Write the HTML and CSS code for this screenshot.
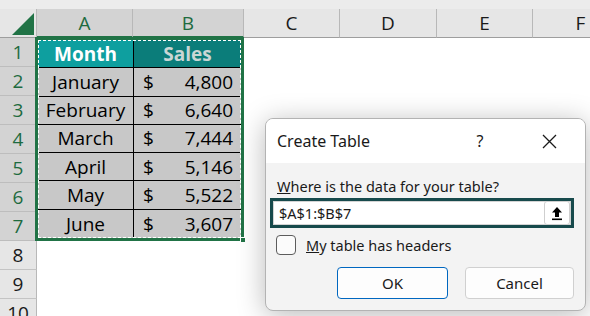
FILE: index.html
```html
<!DOCTYPE html>
<html lang="en">
<head>
  <meta charset="UTF-8" />
  <title>Create Table</title>
  <link rel="stylesheet" href="styles.css">
</head>
<body>

  <div class="topbar"></div>

  <div class="sheet">
    <div class="corner">
      <svg width="22" height="22" viewBox="0 0 22 22"><polygon points="22,0 22,22 0,22" fill="#217346"/></svg>
    </div>
    <div class="colhead sel">A</div>
    <div class="colhead sel">B</div>
    <div class="colhead">C</div>
    <div class="colhead">D</div>
    <div class="colhead">E</div>
    <div class="colhead">F</div>

    <div class="rowhead sel">1</div>
    <div class="rowhead sel">2</div>
    <div class="rowhead sel">3</div>
    <div class="rowhead sel">4</div>
    <div class="rowhead sel">5</div>
    <div class="rowhead sel">6</div>
    <div class="rowhead sel">7</div>
    <div class="rowhead">8</div>
    <div class="rowhead">9</div>
    <div class="rowhead">10</div>

    <div class="data">
      <div class="cell head month">Month</div>
      <div class="cell head sales">Sales</div>

      <div class="cell">January</div>
      <div class="cell amount"><span>$</span><span>4,800</span></div>
      <div class="cell">February</div>
      <div class="cell amount"><span>$</span><span>6,640</span></div>
      <div class="cell">March</div>
      <div class="cell amount"><span>$</span><span>7,444</span></div>
      <div class="cell">April</div>
      <div class="cell amount"><span>$</span><span>5,146</span></div>
      <div class="cell">May</div>
      <div class="cell amount"><span>$</span><span>5,522</span></div>
      <div class="cell">June</div>
      <div class="cell amount"><span>$</span><span>3,607</span></div>
      <div class="handle"></div>
    </div>
  </div>

  <div class="dialog">
    <div class="dialog-title">
      <span class="title-text">Create Table</span>
      <span class="help">?</span>
      <svg class="close" width="15" height="15" viewBox="0 0 15 15">
        <path d="M1 1 L14 14 M14 1 L1 14" stroke="#1a1a1a" stroke-width="1.3" fill="none"/>
      </svg>
    </div>
    <div class="dialog-body">
      <div class="label"><u>W</u>here is the data for your table?</div>
      <div class="range-input">
        <span class="range-text">$A$1:$B$7</span>
        <div class="collapse-btn">
          <svg width="12" height="15" viewBox="0 0 12 15">
            <path d="M6 1 L11 6.5 H8 V11 H4 V6.5 H1 Z" fill="#000"/>
            <rect x="1" y="12.5" width="10" height="1.6" fill="#000"/>
          </svg>
        </div>
      </div>
      <label class="check-row">
        <span class="checkbox"></span>
        <span><u>M</u>y table has headers</span>
      </label>
      <div class="buttons">
        <button class="btn primary">OK</button>
        <button class="btn">Cancel</button>
      </div>
    </div>
  </div>

</body>
</html>
```

FILE: styles.css
```css
* {
  box-sizing: border-box;
}

body {
  margin: 0;
  width: 590px;
  height: 316px;
  overflow: hidden;
  background-color: #ffffff;
  font-family: 'Open Sans', sans-serif;
  position: relative;
}

.topbar {
  height: 9px;
  background-color: #ececec;
}

.sheet {
  display: grid;
  grid-template-columns: 37px 96px 111px 96px 97px 96px 96px;
  grid-template-rows: repeat(11, 29px);
  width: 629px;
}

.corner {
  background-color: #e6e6e6;
  border-right: 1px solid #b8b8b8;
  border-bottom: 1px solid #9e9e9e;
  display: flex;
  align-items: flex-start;
  padding: 4px 0 0 12px;
}

.colhead {
  background-color: #e6e6e6;
  border-right: 1px solid #b8b8b8;
  border-bottom: 1px solid #9e9e9e;
  display: flex;
  align-items: center;
  justify-content: center;
  font-size: 19px;
  color: #1a1a1a;
}

.colhead.sel {
  background-color: #d3d3d3;
  color: #1e6b3f;
  border-bottom: 2px solid #217346;
}

.rowhead {
  grid-column: 1;
  background-color: #e6e6e6;
  border-right: 1px solid #b8b8b8;
  border-bottom: 1px solid #c4c4c4;
  display: flex;
  align-items: center;
  justify-content: center;
  font-size: 19px;
  color: #1a1a1a;
}

.rowhead.sel {
  background-color: #d3d3d3;
  color: #1e6b3f;
  border-bottom-color: #bdbdbd;
}

.data {
  grid-column: 2 / 4;
  grid-row: 2 / 9;
  margin: -1px 0 0 -2px;
  display: grid;
  grid-template-columns: 96px 1fr;
  grid-auto-rows: 1fr;
  border: 3px solid #217346;
  background-color: #c8c8c8;
  position: relative;
}

.data::after {
  content: "";
  position: absolute;
  inset: 0;
  border: 1px dashed #ffffff;
  pointer-events: none;
}

.handle {
  position: absolute;
  right: -5px;
  bottom: -5px;
  width: 6px;
  height: 6px;
  background-color: #217346;
  border: 1px solid #ffffff;
}

.cell {
  display: flex;
  align-items: center;
  justify-content: center;
  font-size: 19px;
  color: #000000;
  border-right: 1px solid #000000;
  border-bottom: 1px solid #000000;
}

.cell:nth-child(2n) {
  border-right: none;
}

.cell:nth-last-child(-n+3) {
  border-bottom: none;
}

.cell.head {
  font-weight: bold;
  color: #ffffff;
}

.cell.month {
  background-color: #0e9f9f;
}

.cell.sales {
  background-color: #0b7d7a;
  color: #c9d6d5;
}

.cell.amount {
  justify-content: space-between;
  padding: 0 8px 0 9px;
}

/* dialog */

.dialog {
  position: absolute;
  left: 265px;
  top: 118px;
  width: 321px;
  height: 193px;
  border: 1px solid #b3b3b3;
  border-radius: 8px;
  background-color: #f3f3f3;
  box-shadow: 0 4px 28px rgba(0, 0, 0, 0.28);
  overflow: hidden;
  font-family: 'Noto Sans', sans-serif;
  color: #1a1a1a;
}

.dialog-title {
  height: 44px;
  background-color: #ffffff;
  display: flex;
  align-items: center;
  padding: 0 0 0 11px;
}

.title-text {
  font-size: 16px;
  flex: 1;
}

.help {
  font-size: 16px;
  width: 20px;
  text-align: center;
  margin-right: 52px;
}

.close {
  margin: 0 28px 0 0;
}

.dialog-body {
  padding: 13px 11px 0 4px;
}

.label {
  font-size: 14.5px;
  margin-left: 7px;
  line-height: 20px;
}

.range-input {
  margin-top: 2px;
  height: 30px;
  border: 3px solid #174a4c;
  background-color: #ffffff;
  box-shadow: inset 0 0 0 1px #d4d4d4;
  display: flex;
  align-items: center;
  justify-content: space-between;
  padding: 0 1px 0 6px;
}

.range-text {
  font-size: 14.5px;
}

.collapse-btn {
  width: 26px;
  height: 24px;
  border: 1px solid #cfcfcf;
  border-radius: 3px;
  background-color: #ffffff;
  display: flex;
  align-items: center;
  justify-content: center;
}

.check-row {
  display: flex;
  align-items: center;
  margin: 7px 0 0 6px;
  font-size: 14.5px;
  gap: 10px;
}

.checkbox {
  width: 20px;
  height: 20px;
  border: 1px solid #5c5c5c;
  border-radius: 4px;
  background-color: #fbfbfb;
}

.buttons {
  display: flex;
  justify-content: flex-end;
  gap: 17px;
  margin-top: 12px;
}

.btn {
  width: 111px;
  height: 32px;
  border: 1px solid #d0d0d0;
  border-radius: 4px;
  background-color: #fdfdfd;
  font-family: 'Noto Sans', sans-serif;
  font-size: 15px;
  color: #1a1a1a;
}

.btn + .btn {
  width: 109px;
}

.btn.primary {
  border-color: #0067c0;
}
```
